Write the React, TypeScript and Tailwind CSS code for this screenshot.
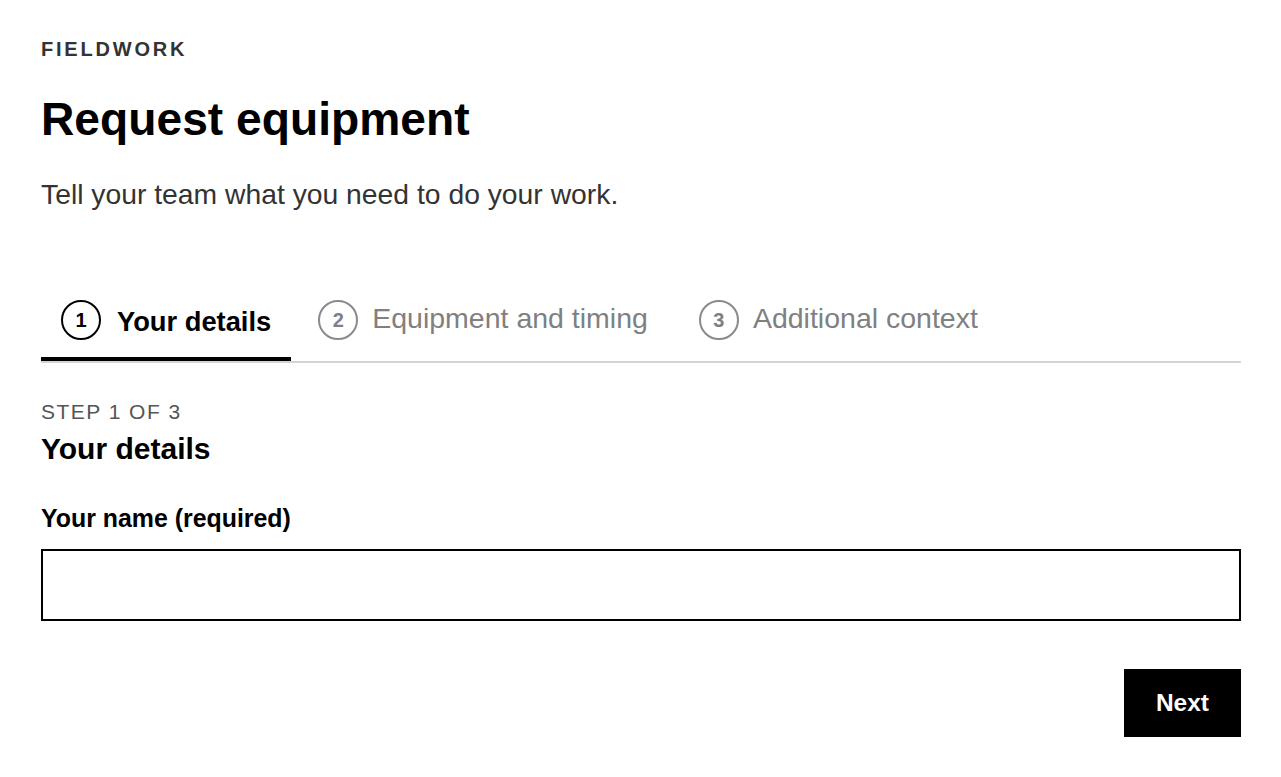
import { useState } from 'react';

const steps = [
  { id: 1, label: 'Your details' },
  { id: 2, label: 'Equipment and timing' },
  { id: 3, label: 'Additional context' },
];

function StepTab({ id, label, active }: { id: number; label: string; active: boolean }) {
  return (
    <div
      role="tab"
      aria-selected={active}
      className={`flex items-center pl-5 pt-[17px] pb-[17px] border-b-4 ${
        active ? 'border-black gap-4 pr-5' : 'border-transparent gap-[14px] pr-6'
      }`}
    >
      <span
        className={`flex h-10 w-10 items-center justify-center rounded-full border-2 text-[20px] font-bold leading-none ${
          active ? 'border-black text-black' : 'border-[#8a8a8a] text-[#808080]'
        }`}
      >
        {id}
      </span>
      <span
        className={
          active
            ? 'text-[27.3px] font-bold leading-none text-black translate-y-[2px]'
            : 'text-[28.5px] leading-none text-[#808080] -translate-y-[1px]'
        }
      >
        {label}
      </span>
    </div>
  );
}

export default function App() {
  const [name, setName] = useState('');
  const current = 1;

  return (
    <div className="min-h-screen bg-white font-['Liberation_Sans',Arial,sans-serif] pl-[41px] pr-10 pt-[39px] pb-10">
      <p className="text-[20px] leading-[20px] font-bold tracking-[0.14em] text-[#333]">FIELDWORK</p>
      <h1 className="mt-[37px] text-[46.2px] leading-none font-bold text-black">Request equipment</h1>
      <p className="mt-[38px] text-[28.3px] leading-none text-[#333]">Tell your team what you need to do your work.</p>

      {/* Step tabs */}
      <div role="tablist" className="mt-[74px] flex gap-[7px] border-b-2 border-[#d4d4d4]">
        {steps.map((s) => (
          <StepTab key={s.id} id={s.id} label={s.label} active={s.id === current} />
        ))}
      </div>

      <p className="mt-[38px] text-[21px] leading-none tracking-[0.07em] text-[#555]">STEP 1 OF 3</p>
      <h2 className="mt-3 text-[30px] leading-none font-bold text-black">Your details</h2>

      <label htmlFor="name" className="mt-[42px] block text-[24.9px] leading-none font-bold text-black">
        Your name (required)
      </label>
      <input
        id="name"
        value={name}
        onChange={(e) => setName(e.target.value)}
        className="mt-[19px] block h-[72px] w-full border-2 border-black px-4 text-[24px] outline-none"
      />

      <div className="mt-12 flex justify-end">
        <button className="h-[68px] bg-black px-8 text-[24.5px] font-bold text-white">Next</button>
      </div>
    </div>
  );
}
